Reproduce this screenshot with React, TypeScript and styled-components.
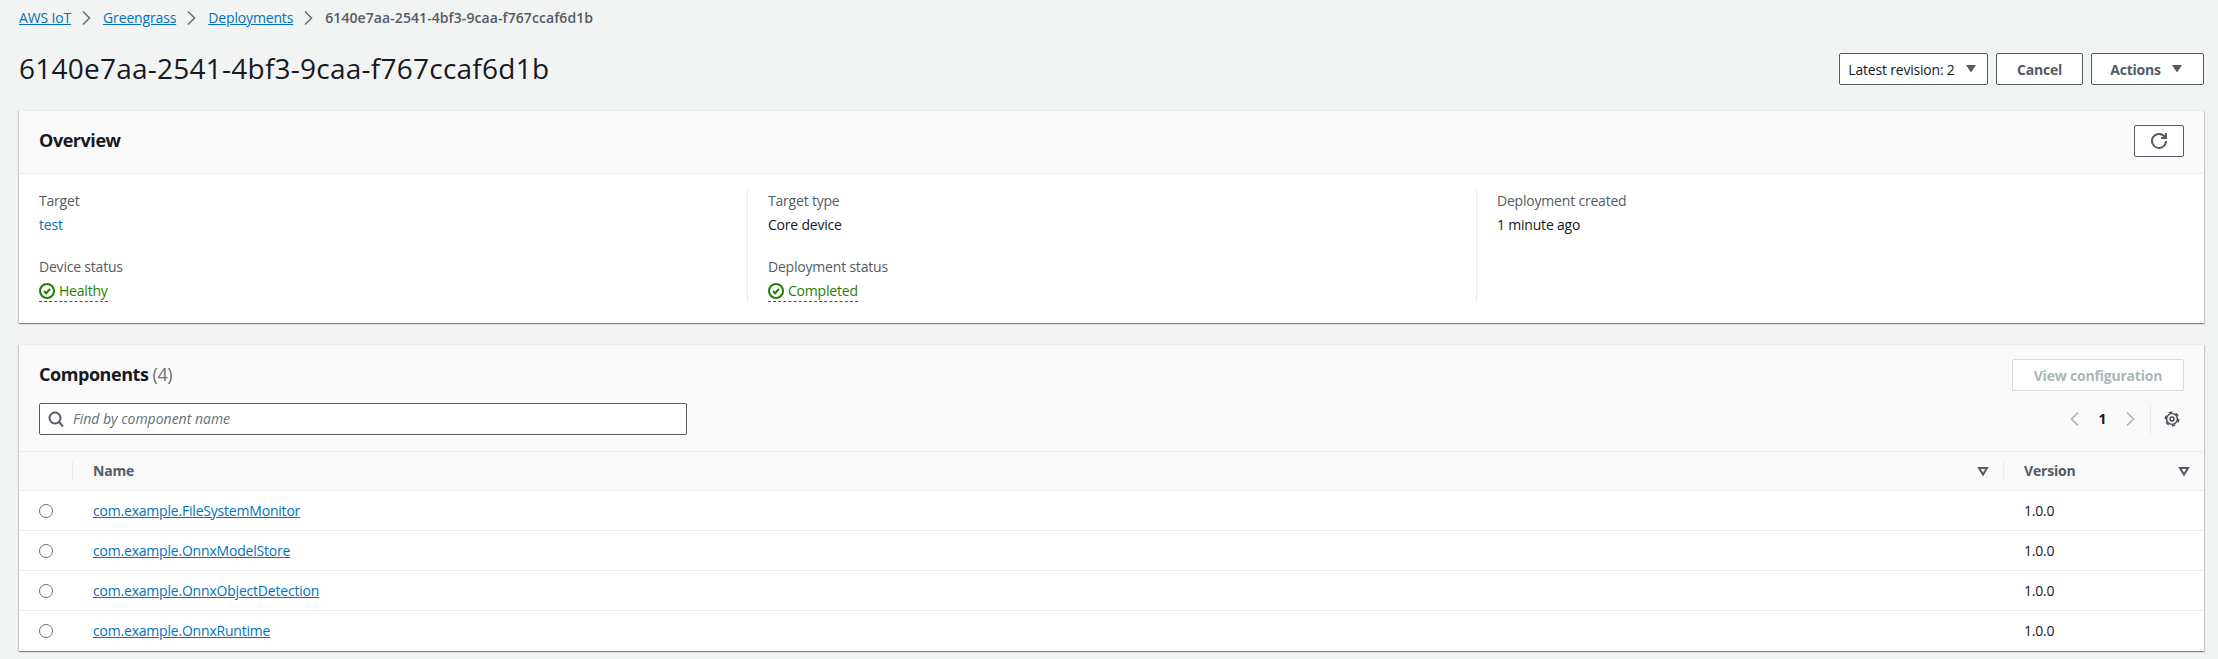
import React from 'react';
import styled, { createGlobalStyle } from 'styled-components';

const GlobalStyle = createGlobalStyle`
  html, body {
    margin: 0;
    background: #f2f3f3;
  }
  body {
    font-family: 'Open Sans', 'Liberation Sans', sans-serif;
    font-size: 14px;
    line-height: 22px;
    letter-spacing: -0.2px;
    color: #16191f;
  }
`;

const Page = styled.main`
  height: 659px;
  box-sizing: border-box;
  padding: 7px 14px 0 19px;
  overflow: hidden;
`;
const Breadcrumbs = styled.nav`
  display: flex;
  align-items: center;
  height: 22px;
  gap: 8px;
  svg {
    width: 16px;
    height: 16px;
    fill: none;
    stroke: #687078;
    stroke-width: 1.6;
  }
`;
const Crumb = styled.a`
  color: #0073bb;
  letter-spacing: -0.15px;
  text-decoration: underline;
`;
const CurrentCrumb = styled.span`
  color: #545b64;
  font-weight: 600;
  letter-spacing: 0.08px;
`;
const PageHeader = styled.header`
  display: flex;
  align-items: center;
  justify-content: space-between;
  height: 32px;
  margin: 24px 0 25px;
`;
const Title = styled.h1`
  margin: 0;
  padding-bottom: 3px;
  font-size: 28px;
  line-height: 36px;
  font-weight: 400;
  letter-spacing: 0.24px;
`;
const Actions = styled.div`
  display: flex;
  gap: 8px;
`;
const Button = styled.button<{ $width?: number; $plain?: boolean }>`
  display: flex;
  align-items: center;
  justify-content: center;
  gap: 8px;
  box-sizing: border-box;
  width: ${(p) => (p.$width ? `${p.$width}px` : 'auto')};
  height: 32px;
  padding: 0;
  background: #fff;
  border: 1px solid #545b64;
  border-radius: 2px;
  color: ${(p) => (p.$plain ? '#16191f' : '#545b64')};
  font-family: inherit;
  font-size: 14px;
  letter-spacing: inherit;
  font-weight: ${(p) => (p.$plain ? 400 : 700)};
  svg {
    width: 16px;
    height: 16px;
  }
  &:disabled {
    border-color: #d5dbdb;
    color: #aab7b8;
  }
`;
const Panel = styled.section`
  background: #fff;
  margin-bottom: 21px;
  box-shadow: 0 1px 1px 0 rgba(0, 28, 36, 0.3), 1px 1px 1px 0 rgba(0, 28, 36, 0.15),
    -1px 1px 1px 0 rgba(0, 28, 36, 0.15);
  border-top: 1px solid #eaeded;
`;
const PanelHeader = styled.div`
  background: #fafafa;
  border-bottom: 1px solid #eaeded;
  padding: 14px 20px 16px;
`;
const TitleRow = styled.div`
  display: flex;
  align-items: center;
  justify-content: space-between;
  height: 32px;
`;
const PanelTitle = styled.h2`
  margin: 0;
  padding-bottom: 2px;
  font-size: 18px;
  line-height: 22px;
  font-weight: 700;
  letter-spacing: -0.45px;
  span {
    color: #687078;
    font-weight: 400;
  }
`;
const Columns = styled.div`
  display: grid;
  grid-template-columns: 729px 729px 1fr;
  padding: 16px 0 21px;
`;
const Column = styled.div<{ $divider?: boolean }>`
  padding-left: 20px;
  border-left: ${(p) => (p.$divider ? '1px solid #eaeded' : 'none')};
  margin-left: ${(p) => (p.$divider ? '-1px' : '0')};
`;
const Field = styled.div`
  & + & {
    margin-top: 20px;
  }
`;
const Label = styled.div`
  color: #545b64;
  margin-bottom: 2px;
`;
const Value = styled.div`
  height: 22px;
`;
const PlainLink = styled.a`
  color: #0073bb;
`;
const Status = styled.span`
  display: inline-flex;
  align-items: center;
  gap: 4px;
  height: 21px;
  color: #1d8102;
  border-bottom: 1px dashed #1d8102;
  svg {
    width: 16px;
    height: 16px;
    fill: none;
    stroke: #1d8102;
    stroke-width: 2;
  }
`;
const Toolbar = styled.div`
  display: flex;
  align-items: center;
  justify-content: space-between;
  margin-top: 12px;
`;
const Search = styled.div`
  display: flex;
  align-items: center;
  gap: 9px;
  box-sizing: border-box;
  width: 648px;
  height: 32px;
  padding: 0 8px;
  background: #fff;
  border: 1px solid #545b64;
  border-radius: 2px;
  color: #687078;
  font-style: italic;
  letter-spacing: 0;
  svg {
    width: 16px;
    height: 16px;
    fill: none;
    stroke: #545b64;
    stroke-width: 2;
  }
`;
const Pagination = styled.div`
  display: flex;
  align-items: center;
  height: 32px;
  font-weight: 700;
`;
const PageArrow = styled.svg`
  width: 16px;
  height: 16px;
  fill: none;
  stroke: #aab7b8;
  stroke-width: 1.6;
`;
const PageNumber = styled.span`
  width: 39px;
  text-align: center;
`;
const PreferenceSlot = styled.div`
  display: flex;
  align-items: center;
  box-sizing: border-box;
  width: 34px;
  height: 32px;
  margin-left: 12px;
  padding-left: 13px;
  border-left: 1px solid #eaeded;
  svg {
    width: 16px;
    height: 16px;
    fill: none;
    stroke: #414750;
  }
`;
const Row = styled.div<{ $head?: boolean; $last?: boolean }>`
  display: grid;
  grid-template-columns: 53px 1931px 1fr;
  align-items: center;
  height: ${(p) => (p.$head ? '39px' : '40px')};
  box-sizing: border-box;
  background: ${(p) => (p.$head ? '#fafafa' : '#fff')};
  border-bottom: ${(p) => (p.$last ? 'none' : '1px solid #eaeded')};
`;
const RadioCell = styled.div`
  display: flex;
  padding-left: 20px;
`;
const Radio = styled.span`
  width: 14px;
  height: 14px;
  box-sizing: border-box;
  border: 1.5px solid #687078;
  border-radius: 50%;
  background: #fff;
`;
const Cell = styled.div<{ $divider?: boolean }>`
  display: flex;
  align-items: center;
  justify-content: space-between;
  height: 20px;
  padding: 0 14px 0 20px;
  border-left: ${(p) => (p.$divider ? '1px solid #eaeded' : '1px solid transparent')};
`;
const HeadText = styled.span`
  color: #545b64;
  font-weight: 700;
`;
const SortIcon = styled.svg`
  width: 12px;
  height: 12px;
  fill: none;
  stroke: #545b64;
  stroke-width: 2;
`;
const CaretIcon = styled.svg`
  fill: #545b64;
`;
const NameLink = styled.a`
  color: #0073bb;
  text-decoration: underline;
`;

const Chevron = () => (
  <svg viewBox="0 0 16 16">
    <path d="M4 1.5L10.5 8 4 14.5" />
  </svg>
);
const Caret = () => (
  <CaretIcon viewBox="0 0 16 16">
    <path d="M3 4h10L8 11.5z" />
  </CaretIcon>
);
const Check = () => (
  <svg viewBox="0 0 16 16">
    <circle cx="8" cy="8" r="7" />
    <path d="M5 8l2.2 2.2L11 6" />
  </svg>
);
const Sort = () => (
  <SortIcon viewBox="0 0 12 12">
    <path d="M2 3h8L6 9.5z" />
  </SortIcon>
);

const components = [
  'com.example.FileSystemMonitor',
  'com.example.OnnxModelStore',
  'com.example.OnnxObjectDetection',
  'com.example.OnnxRuntime',
];

export default function App() {
  return (
    <>
      <GlobalStyle />
      <Page>
        <Breadcrumbs>
          <Crumb>AWS IoT</Crumb>
          <Chevron />
          <Crumb>Greengrass</Crumb>
          <Chevron />
          <Crumb>Deployments</Crumb>
          <Chevron />
          <CurrentCrumb>6140e7aa-2541-4bf3-9caa-f767ccaf6d1b</CurrentCrumb>
        </Breadcrumbs>
        <PageHeader>
          <Title>6140e7aa-2541-4bf3-9caa-f767ccaf6d1b</Title>
          <Actions>
            <Button $width={149} $plain>
              Latest revision: 2
              <Caret />
            </Button>
            <Button $width={87}>Cancel</Button>
            <Button $width={113}>
              Actions
              <Caret />
            </Button>
          </Actions>
        </PageHeader>

        <Panel>
          <PanelHeader>
            <TitleRow>
              <PanelTitle>Overview</PanelTitle>
              <Button $width={50}>
                <svg viewBox="0 0 16 16" fill="none" stroke="currentColor" strokeWidth="2">
                  <path d="M10 5h5V0" />
                  <path d="M15 8a7 7 0 1 1-2-5l2 2" />
                </svg>
              </Button>
            </TitleRow>
          </PanelHeader>
          <Columns>
            <Column>
              <Field>
                <Label>Target</Label>
                <Value>
                  <PlainLink>test</PlainLink>
                </Value>
              </Field>
              <Field>
                <Label>Device status</Label>
                <Value>
                  <Status>
                    <Check />
                    Healthy
                  </Status>
                </Value>
              </Field>
            </Column>
            <Column $divider>
              <Field>
                <Label>Target type</Label>
                <Value>Core device</Value>
              </Field>
              <Field>
                <Label>Deployment status</Label>
                <Value>
                  <Status>
                    <Check />
                    Completed
                  </Status>
                </Value>
              </Field>
            </Column>
            <Column $divider>
              <Field>
                <Label>Deployment created</Label>
                <Value>1 minute ago</Value>
              </Field>
            </Column>
          </Columns>
        </Panel>

        <Panel>
          <PanelHeader>
            <TitleRow>
              <PanelTitle>
                Components <span>(4)</span>
              </PanelTitle>
              <Button $width={172} disabled>
                View configuration
              </Button>
            </TitleRow>
            <Toolbar>
              <Search>
                <svg viewBox="0 0 16 16">
                  <circle cx="7" cy="7" r="5.5" />
                  <path d="M11 11l4 4.5" />
                </svg>
                Find by component name
              </Search>
              <Pagination>
                <PageArrow viewBox="0 0 16 16">
                  <path d="M11 1.5L4.5 8l6.5 6.5" />
                </PageArrow>
                <PageNumber>1</PageNumber>
                <PageArrow viewBox="0 0 16 16">
                  <path d="M5 1.5L11.5 8 5 14.5" />
                </PageArrow>
                <PreferenceSlot>
                  <svg viewBox="0 0 16 16">
                    <circle cx="8" cy="8" r="5.4" strokeWidth="1.4" />
                    <circle cx="8" cy="8" r="6.7" strokeWidth="1.4" strokeDasharray="3.5 3.52" />
                    <circle cx="8" cy="8" r="2" strokeWidth="1.4" />
                  </svg>
                </PreferenceSlot>
              </Pagination>
            </Toolbar>
          </PanelHeader>
          <Row $head>
            <span />
            <Cell $divider>
              <HeadText>Name</HeadText>
              <Sort />
            </Cell>
            <Cell $divider>
              <HeadText>Version</HeadText>
              <Sort />
            </Cell>
          </Row>
          {components.map((name, i) => (
            <Row key={name} $last={i === components.length - 1}>
              <RadioCell>
                <Radio />
              </RadioCell>
              <Cell>
                <NameLink>{name}</NameLink>
              </Cell>
              <Cell>1.0.0</Cell>
            </Row>
          ))}
        </Panel>
      </Page>
    </>
  );
}
